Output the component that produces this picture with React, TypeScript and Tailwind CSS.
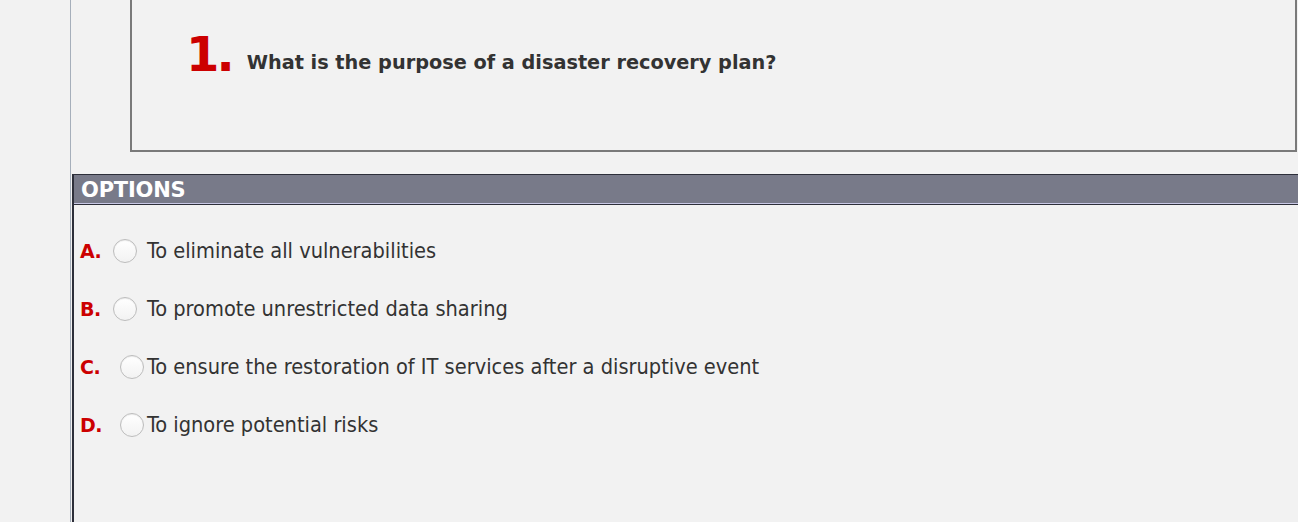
import React from 'react';

const options = [
    { letter: 'A.', text: 'To eliminate all vulnerabilities', shift: false },
    { letter: 'B.', text: 'To promote unrestricted data sharing', shift: false },
    { letter: 'C.', text: 'To ensure the restoration of IT services after a disruptive event', shift: true },
    { letter: 'D.', text: 'To ignore potential risks', shift: true },
];

const Radio = () => (
    <span className="block w-[24px] h-[24px] rounded-full border border-[#bdbdbd] bg-gradient-to-b from-[#ffffff] to-[#f2f2f2] shadow-[inset_0_1px_1px_rgba(0,0,0,0.08)]" />
);

export default function App() {
    return (
        <div className="flex h-[522px] w-[1298px] overflow-hidden bg-[#f2f2f2] text-[#333]" style={{ fontFamily: '"DejaVu Sans", Verdana, sans-serif' }}>
            <div className="w-[71px] shrink-0 border-r border-[#a6afbb]" />
            <div className="flex-1 min-w-0 pl-[1px] flex flex-col">
                <div className="pl-[58px] pr-[1px]">
                    <div className="h-[152px] border-l-2 border-b-2 border-r-2 border-[#7a7a7a] flex items-start pt-[30px] pl-[54px]">
                        <span className="text-[48px] leading-none font-bold text-[#cc0000] tracking-[-3px] mr-[15px]">1.</span>
                        <span className="text-[19.3px] font-bold text-[#333] mt-[19px]">What is the purpose of a disaster recovery plan?</span>
                    </div>
                </div>
                <div className="mt-[22px] flex-1 border-l-2 border-[#2d2f3a] flex flex-col">
                    <div className="border-t border-[#2d2f3a]">
                        <div className="h-[29px] bg-[#787a89] pl-[7px] pt-[3px] flex items-center text-white font-bold text-[21px] tracking-[-0.2px] border-b border-[#c9c9e6]">OPTIONS</div>
                        <div className="h-[1px] bg-[#2d2f3a]" />
                    </div>
                    <div className="flex flex-col pt-[33px]">
                        {options.map((o) => (
                            <div key={o.letter} className="h-[58px] flex items-start pl-[6px]">
                                <div className="flex items-center h-[26px]">
                                    <span className="w-[33px] text-[19px] font-bold text-[#cc0000] tracking-[-0.5px]">{o.letter}</span>
                                    <span className={o.shift ? 'ml-[7px]' : ''}><Radio /></span>
                                    <span className={o.shift ? 'ml-[3px] text-[21.6px]' : 'ml-[10px] text-[21.6px]'} style={{ fontFamily: '"DejaVu Sans Condensed", "DejaVu Sans", sans-serif' }}>{o.text}</span>
                                </div>
                            </div>
                        ))}
                    </div>
                </div>
            </div>
        </div>
    );
}
